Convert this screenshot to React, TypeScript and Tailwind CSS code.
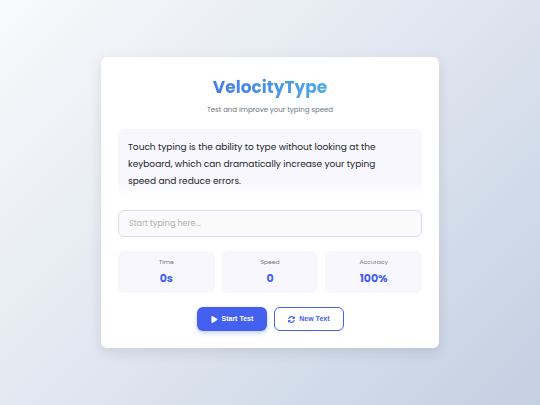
import { useRef, useState } from 'react'
import { FaPlay, FaSyncAlt } from 'react-icons/fa'

const passages = [
  'Touch typing is the ability to type without looking at the keyboard, which can dramatically increase your typing speed and reduce errors.',
  'The quick brown fox jumps over the lazy dog. Practice every day and your fingers will learn where each key is.',
]

function Stat({ label, value }: { label: string; value: string }) {
  return (
    <div className="flex flex-col items-center gap-1 rounded-md bg-[#f8f7fe] px-2 pt-1.5 pb-[7px]">
      <dt className="text-[6px] leading-[10px] text-[#6c757d]">{label}</dt>
      <dd className="text-[11px] leading-[15px] font-bold text-[#4361ee]">{value}</dd>
    </div>
  )
}

export default function App() {
  const [index, setIndex] = useState(0)
  const [typed, setTyped] = useState('')
  const input = useRef<HTMLInputElement>(null)

  const nextText = () => {
    setIndex((index + 1) % passages.length)
    setTyped('')
  }

  return (
    <div className="flex min-h-screen items-center justify-center bg-linear-135 from-[#f8fafb] via-[#e0e6f0] to-[#c3cfe2] p-4 font-[Poppins,Inter,sans-serif] text-[#212529]">
      <main className="w-full max-w-[338px] rounded-md bg-white p-[17px] shadow-[0_4px_13px_rgba(0,0,0,0.1)]">
        <header className="mb-3.5 text-center">
          <h1 className="mx-auto w-fit bg-linear-to-r from-[#4a7de0] to-[#4eaae4] bg-clip-text text-[17px] leading-[26px] font-bold text-transparent">
            VelocityType
          </h1>
          <p className="mt-1 text-[7px] leading-[11px] text-[#6c757d]">Test and improve your typing speed</p>
        </header>

        <section className="relative mb-3.5 overflow-hidden rounded-md bg-[#f8f7fe] pt-2.5 pr-6 pb-1.5 pl-2.5">
          {/* fades the end of the passage into the card */}
          <div className="absolute inset-x-0 bottom-0 h-3.5 bg-linear-to-t from-white to-transparent" />
          <p className="relative text-[9px] leading-[17px]">{passages[index]}</p>
        </section>

        <input
          ref={input}
          type="text"
          aria-label="Typing area"
          value={typed}
          onChange={(e) => setTyped(e.target.value)}
          placeholder="Start typing here..."
          className="mb-3.5 block h-[27px] w-full rounded-md border border-[#dedcf2] bg-[#fafafa] px-2.5 text-[8px] leading-6 outline-none placeholder:text-[#b0b0b0] focus:border-[#4361ee]"
        />

        <dl className="mb-3.5 grid grid-cols-3 gap-[7px]">
          <Stat label="Time" value="0s" />
          <Stat label="Speed" value="0" />
          <Stat label="Accuracy" value="100%" />
        </dl>

        <div className="flex justify-center gap-[7px] font-['Liberation_Sans',Arial,sans-serif] text-[7px] font-bold">
          <button
            type="button"
            onClick={() => input.current?.focus()}
            className="flex h-6 items-center gap-1 rounded-md bg-[#4361ee] px-3.5 text-white shadow-[0_2px_5px_rgba(67,97,238,0.3)]"
          >
            <FaPlay className="size-[7px]" />
            Start Test
          </button>
          <button
            type="button"
            onClick={nextText}
            className="flex h-6 items-center gap-1 rounded-md border border-[#4361ee] bg-white px-[13px] text-[#4361ee]"
          >
            <FaSyncAlt className="size-[7px]" />
            New Text
          </button>
        </div>
      </main>
    </div>
  )
}
